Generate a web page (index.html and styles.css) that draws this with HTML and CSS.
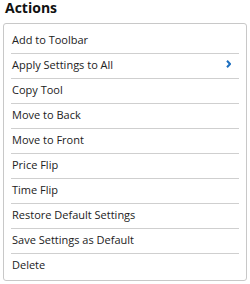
FILE: index.html
```html
<!DOCTYPE html>
<html>
<head>
<meta charset="utf-8">
<link rel="stylesheet" href="styles.css">
</head>
<body>
<div class="title">Actions</div>
<div class="menu">
  <div class="item">Add to Toolbar</div>
  <div class="item">Apply Settings to All
    <svg class="chev" width="5" height="8" viewBox="0 0 5 8"><path d="M1 0.8 L4 4 L1 7.2" fill="none" stroke="#1d6fbf" stroke-width="2"/></svg>
  </div>
  <div class="item">Copy Tool</div>
  <div class="item">Move to Back</div>
  <div class="item">Move to Front</div>
  <div class="item">Price Flip</div>
  <div class="item">Time Flip</div>
  <div class="item">Restore Default Settings</div>
  <div class="item">Save Settings as Default</div>
  <div class="item">Delete</div>
</div>
</body>
</html>
```
FILE: styles.css
```css
html, body {
  margin: 0;
  padding: 0;
  background: #fff;
}
body {
  font-family: "Open Sans", "DejaVu Sans", sans-serif;
  color: #222;
}
.title {
  font-weight: 700;
  font-size: 14px;
  line-height: 16px;
  color: #111;
  padding-left: 5px;
}
.menu {
  margin: 7px 3px 0 3px;
  border: 1px solid #c8c8c8;
  border-radius: 3px;
  padding: 5px 7px 2px 7px;
}
.item {
  display: flex;
  align-items: center;
  justify-content: space-between;
  height: 22px;
  padding: 0 8px 2px 1px;
  font-size: 11px;
  line-height: 22px;
  border-bottom: 1px solid #cfcfcf;
}
.item:last-child {
  border-bottom: none;
}
.chev {
  display: block;
  margin-bottom: 2px;
}
```
